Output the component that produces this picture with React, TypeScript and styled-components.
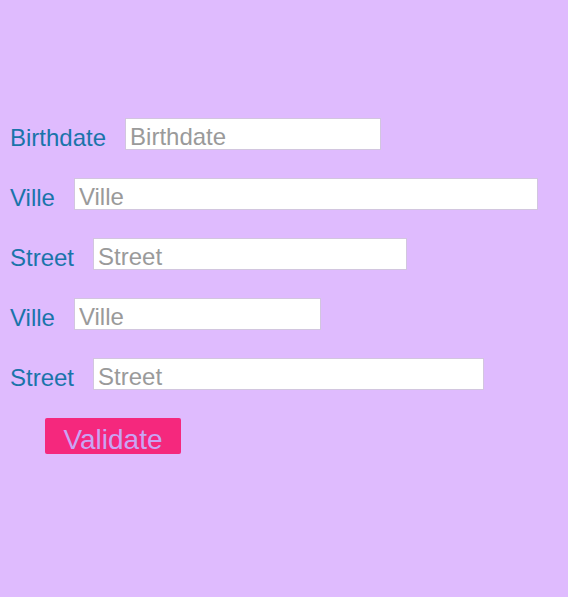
import React from "react";
import styled, { createGlobalStyle } from "styled-components";

const Global = createGlobalStyle`
  html, body { margin: 0; padding: 0; background: #dfbbfe; }
  body { font-family: "Liberation Sans", Arial, sans-serif; }
`;

const Page = styled.div`
  width: 568px;
  height: 597px;
  box-sizing: border-box;
  padding: 118px 10px 0 10px;
  background: #dfbbfe;
  display: flex;
  flex-direction: column;
  gap: 28px;
`;

const Row = styled.div`
  display: flex;
  align-items: center;
  gap: 19px;
  height: 32px;
`;

const Label = styled.label`
  font-family: "Liberation Sans", Arial, sans-serif;
  font-size: 24px;
  color: #1a74aa;
  line-height: 32px;
  padding-top: 8px;
`;

const Input = styled.input<{ $w: number }>`
  box-sizing: border-box;
  width: ${(p) => p.$w}px;
  height: 32px;
  border: 1px solid #d2c6df;
  background: #ffffff;
  padding: 6px 4px 0 4px;
  margin: 0;
  font-family: "Liberation Sans", Arial, sans-serif;
  font-size: 24px;
  color: #333;
  outline: none;
  &::placeholder { color: #9a9a9a; opacity: 1; }
`;

const Button = styled.button`
  align-self: flex-start;
  margin-left: 35px;
  box-sizing: border-box;
  width: 136px;
  height: 36px;
  border: none;
  border-radius: 2px;
  background: #f5287d;
  color: #c9a4f4;
  font-family: "Liberation Sans", Arial, sans-serif;
  font-size: 28px;
  padding: 8px 0 0 0;
  line-height: 28px;
  cursor: pointer;
`;

const fields: { label: string; w: number }[] = [
  { label: "Birthdate", w: 256 },
  { label: "Ville", w: 464 },
  { label: "Street", w: 314 },
  { label: "Ville", w: 247 },
  { label: "Street", w: 391 },
];

export default function App() {
  return (
    <>
      <Global />
      <Page>
        {fields.map((f, i) => (
          <Row key={i}>
            <Label>{f.label}</Label>
            <Input $w={f.w} placeholder={f.label} />
          </Row>
        ))}
        <Button>Validate</Button>
      </Page>
    </>
  );
}
